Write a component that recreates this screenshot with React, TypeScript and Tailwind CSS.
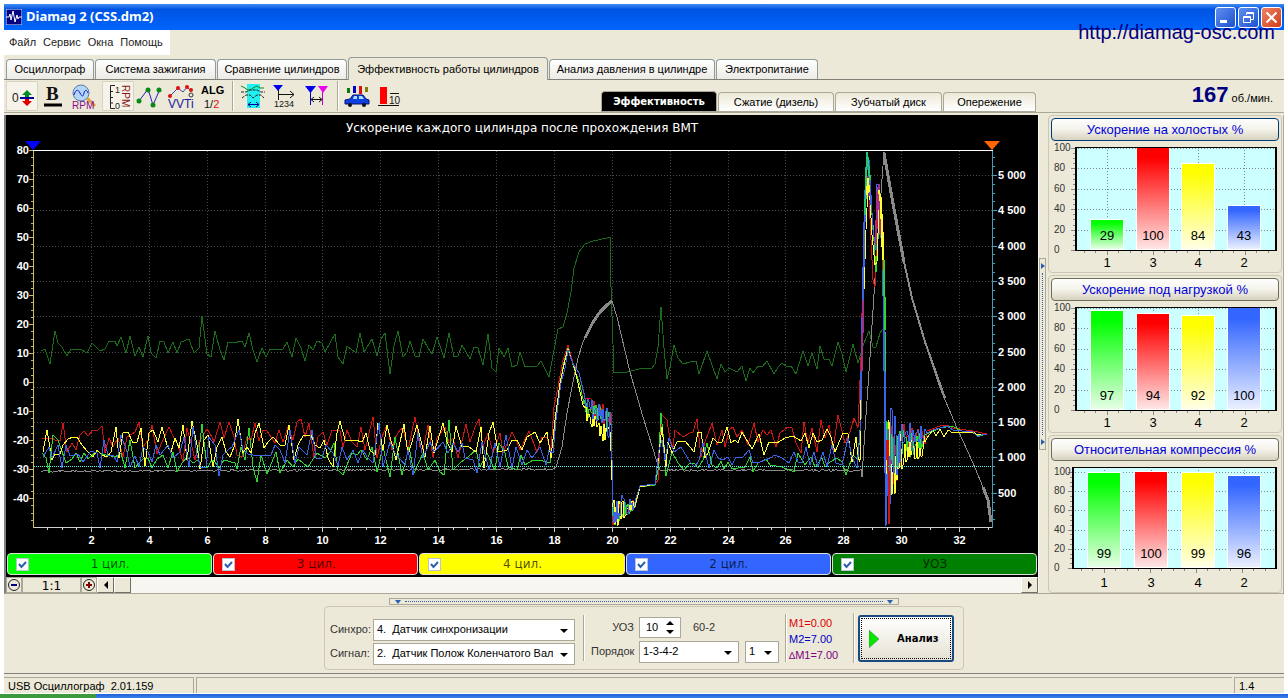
import React, { useState } from 'react';
import { clsx } from 'clsx';

const SANS = "font-['Liberation_Sans',Arial,sans-serif]";

const mainTabs = [
  { label: 'Осциллограф', width: 'w-[88px]' },
  { label: 'Система зажигания', width: 'w-[121px]' },
  { label: 'Сравнение цилиндров', width: 'w-[130px]' },
  { label: 'Эффективность работы цилиндров', width: 'w-[200px]' },
  { label: 'Анализ давления в цилиндре', width: 'w-[166px]' },
  { label: 'Электропитание', width: 'w-[102px]' },
];

const subTabs = [
  { label: 'Эффективность', width: 'w-[116px]' },
  { label: 'Сжатие (дизель)', width: 'w-[116px]' },
  { label: 'Зубчатый диск', width: 'w-[107px]' },
  { label: 'Опережение', width: 'w-[93px]' },
];

const legend = [
  { label: '1 цил.', color: 'bg-[#00ff00]' },
  { label: '3 цил.', color: 'bg-[#ff0000]' },
  { label: '4 цил.', color: 'bg-[#ffff00]' },
  { label: '2 цил.', color: 'bg-[#3366ff]' },
  { label: 'УОЗ', color: 'bg-[#008000]' },
];

// ---------- traces ----------

// dense jitter between two levels, one point per pixel
const burst = (x0: number, x1: number, y0: number, y1: number, a0: number, a1: number, seed: number) => {
  const pts: string[] = [];
  let s = seed;
  for (let x = x0; x <= x1; x++) {
    s = (s * 9301 + 49297) % 233280;
    const t = (x - x0) / (x1 - x0);
    const y = y0 + (y1 - y0) * t + (s / 233280 - 0.5) * 2 * (a0 + (a1 - a0) * t);
    pts.push(`${x},${Math.round(Math.min(y, 526))}`);
  }
  return pts.join(' ');
};

const advance =
  '41,351 45,349 50,364 55,331 58,343 62,347 67,356 71,349 80,349 87,353 92,343 100,351 105,349 109,341 115,341 117,346 121,337 126,353 130,336 135,356 139,347 143,357 148,336 151,353 156,358 160,341 164,342 168,353 173,342 177,353 181,342 189,339 194,353 199,348 202,316 207,354 211,357 215,331 220,350 224,360 228,342 233,343 242,341 245,347 249,333 253,350 257,362 262,348 266,357 270,349 283,349 287,342 292,357 296,338 301,348 305,361 309,345 313,350 317,341 322,343 325,352 335,334 338,357 343,364 347,346 356,353 360,333 364,352 372,339 377,356 381,339 385,333 390,374 394,346 398,331 403,357 407,352 410,341 415,356 419,357 423,339 428,348 432,354 437,337 444,358 449,333 454,357 458,356 462,345 470,359 474,347 478,348 483,365 488,334 492,368 496,372 499,348 504,357 508,348 512,367 517,365 520,352 525,367 537,366 541,361 549,377 554,350 558,329 563,327 567,313 571,292 574,268 579,252 585,244 593,241 607,238 610,237 611,287 614,373 627,372 643,368 652,368 655,364 658,347 661,307 664,348 667,379 670,367 674,345 678,358 683,364 690,362 696,361 699,374 707,351 717,379 721,364 725,372 729,368 737,372 742,366 746,381 750,368 753,373 758,366 762,367 767,361 774,374 778,367 782,363 787,367 791,366 796,374 803,351 808,366 812,353 817,369 820,346 824,359 829,359 832,366 838,342 842,354 846,372 853,344 858,363 864,343 869,331 873,347 876,347 880,333 883,329';

const rpm = [
  burst(41, 553, 471, 469, 1, 1, 11),
  '556,467 562,447 567,413 572,387 578,358 583,342 590,327 598,314 607,305 612,301 617,317 630,372 643,417 657,462 660,470',
  burst(662, 861, 470, 470, 1, 1, 5),
  '862,477 865,430 870,357 873,310 876,263 881,193 884,152 890,190 901,247 910,290 923,337 940,388 957,428 973,463 983,487 987,497 991,522',
].join(' ');

const tail = '927,433 933,430 940,428 947,426 953,430 962,431 973,432 978,437 983,434 987,434';

const cyl3 = [
  '42,438 52,438 55,440 60,441 63,423 67,452 72,443 76,450 80,435 84,431 88,436 93,430 97,431 102,426 105,453 109,438 113,447 118,438 123,457 127,437 132,434 135,432 139,422 143,447 148,440 152,425 157,454 162,442 169,427 173,436 178,445 183,462 187,428 192,447 195,460 199,442 207,429 212,437 214,442 220,422 224,438 229,422 234,437 237,455 242,457 247,437 251,440 255,423 259,441 263,430 267,431 275,443 279,430 283,442 288,427 293,440 297,422 301,419 305,437 309,423 314,458 318,437 323,432 327,445 332,430 340,431 343,447 347,430 352,442 357,447 361,427 365,450 373,417 377,458 382,437 387,425 392,450 395,438 400,430 403,428 408,450 415,417 420,447 423,450 428,425 433,457 437,438 445,427 449,443 453,438 458,458 466,424 470,442 475,427 479,419 483,447 488,433 493,453 500,433 503,453 512,432 517,442 520,450 529,431 537,452 542,437 547,438 551,450 554,407 558,387 563,360 568,345 573,363 579,373 585,398',
  burst(587, 611, 406, 418, 9, 12, 71),
  burst(613, 635, 512, 504, 14, 4, 19),
  '640,486 655,485 658,480 662,415 667,420 670,440 673,447 675,430 683,437 690,433 693,432 697,419 701,457 705,442 712,423 717,445 722,430 725,447 729,430 733,427 737,437 742,430 748,445 754,423 758,442 763,430 767,435 771,430 776,447 780,433 788,427 792,428 796,443 801,453 804,422 808,443 812,428 817,452 821,420 825,438 829,425 833,450 838,415 845,443 850,432 854,418 858,428 861,357 863,270 866,190 868,176 871,240 873,280 875,287 877,230 879,184 881,205 883,270 885,380 887,490',
  burst(888, 903, 470, 445, 50, 15, 33),
  burst(904, 925, 440, 436, 16, 8, 45),
  '927,431 940,426 947,425 953,428 973,431 987,434',
].join(' ');

const cyl4 = [
  '43,452 47,430 52,460 55,454 60,454 63,445 68,439 73,437 77,437 82,445 87,451 93,457 97,450 102,455 107,457 111,452 116,427 119,458 123,433 128,432 133,443 137,442 141,428 145,466 149,433 153,430 158,442 162,427 167,445 171,452 175,438 179,448 183,425 187,460 192,421 197,445 200,469 204,440 208,435 213,467 217,447 222,437 226,452 230,457 234,447 238,419 243,453 247,447 251,453 255,433 259,423 264,448 268,442 273,437 280,445 285,445 289,425 294,460 298,445 303,436 311,435 315,445 320,448 324,440 328,458 333,467 337,433 340,421 345,440 348,440 355,440 362,442 366,433 370,450 375,455 378,423 383,450 387,425 396,460 404,424 408,455 417,425 425,457 430,426 434,453 443,423 447,442 452,452 456,426 462,447 468,446 476,452 481,427 484,468 489,433 493,422 498,452 507,450 512,440 517,440 522,450 527,437 535,432 540,443 547,432 551,458 555,420 560,383 565,360 568,349 575,370 583,405',
  burst(585, 611, 412, 440, 8, 12, 101),
  '612,480',
  burst(613, 635, 515, 504, 18, 5, 77),
  '640,487 655,484 659,453 662,427 666,467 668,442 672,453 677,442 685,441 690,447 694,452 698,432 701,432 705,458 708,453 713,438 718,443 722,442 727,427 731,443 735,440 738,443 742,432 752,449 759,434 764,455 769,442 777,443 785,438 793,436 801,441 805,433 809,448 813,433 817,442 822,440 827,429 831,437 835,452 840,440 843,433 848,434 852,462 856,437 858,457 860,462 861,378 864,290 866,230 868,186 870,200 872,235 875,265 877,262 879,205 881,197 883,230 884,330 886,460',
  burst(887, 903, 460, 460, 50, 24, 61),
  burst(904, 925, 455, 444, 20, 12, 9),
  '927,438 933,430 936,436 940,429 944,437 948,430 953,433 960,432 973,432 978,435 987,434',
].join(' ');

const cyl2 = [
  '43,457 49,447 52,458 58,445 62,468 66,445 70,456 78,454 83,462 91,451 97,453 100,468 104,440 108,455 113,455 117,462 121,435 127,452 130,467 135,456 139,467 143,447 148,452 152,462 156,445 160,455 168,445 173,458 180,452 184,437 189,467 193,427 197,455 201,468 206,467 209,437 215,445 219,476 223,455 228,450 232,447 239,430 243,450 248,454 258,456 271,455 275,445 280,450 285,463 290,430 295,463 299,447 307,455 312,430 316,458 322,458 326,445 333,453 338,466 342,447 347,460 353,450 358,463 363,450 367,457 373,463 379,423 383,467 390,442 395,453 405,465 408,450 413,475 418,433 423,458 430,442 434,452 443,442 448,453 453,443 458,452 462,443 465,458 473,460 477,473 482,442 489,470 495,443 500,467 506,435 512,468 516,447 522,465 527,450 532,458 540,447 546,465 549,450 553,453 556,420 561,383 565,368 568,350 573,364 579,373 584,393',
  burst(586, 611, 405, 425, 10, 16, 7),
  '612,460',
  burst(613, 633, 508, 506, 17, 6, 29),
  '636,498 640,486 655,484 659,450 662,440 665,460 669,438 674,452 681,447 690,462 695,467 699,460 703,443 709,468 714,450 718,458 723,460 728,457 732,465 736,457 743,457 749,450 753,463 760,462 770,458 775,455 782,458 789,463 794,452 798,462 802,463 806,447 810,465 814,452 818,467 823,452 827,467 832,445 836,463 842,465 848,438 852,457 857,468 859,443 861,420 863,290 865,200 867,165 869,160 871,195 873,230 876,250 876,184 878,184 880,235 882,240 884,262 885,380 886,526',
  burst(887, 900, 460, 445, 62, 20, 15),
  burst(901, 925, 440, 434, 20, 9, 83),
  tail,
].join(' ');

const cyl1 = [
  '42,453 46,458 49,473 53,435 58,440 66,463 72,459 76,453 80,462 84,453 88,459 97,451 102,454 115,457 121,453 125,468 130,440 135,468 139,463 143,459 148,458 152,468 157,459 163,455 168,468 173,452 177,472 182,463 187,457 193,463 198,460 202,424 207,468 212,460 215,462 219,468 224,460 235,463 237,469 241,447 245,460 249,428 253,467 257,482 261,455 267,474 276,452 280,473 287,460 293,467 298,459 308,467 317,453 325,458 330,452 334,443 338,470 343,475 347,465 352,453 357,455 361,450 367,460 372,447 377,472 383,447 390,477 395,437 402,475 409,447 414,473 423,453 428,470 435,460 440,472 444,475 449,420 453,470 460,463 468,457 476,450 480,467 487,453 495,470 499,443 505,453 508,467 517,470 521,455 525,465 533,460 543,461 550,463 554,433 559,390 564,362 568,348 574,368 580,385',
  burst(584, 611, 407, 424, 8, 13, 53),
  burst(613, 635, 510, 505, 17, 5, 37),
  '640,487 655,485 658,470 661,413 664,445 666,476 672,452 678,463 684,470 690,463 694,463 698,468 703,460 707,443 712,465 717,468 721,461 724,469 728,462 732,469 745,467 750,457 753,472 758,463 766,459 770,465 782,467 794,472 798,453 805,465 811,457 815,467 822,458 825,467 830,462 837,458 842,462 846,475 853,455 858,460 860,430 863,310 865,210 867,152 869,168 871,205 873,225 876,272 878,240 880,195 882,225 884,262 885,330 886,440',
  burst(887, 902, 455, 450, 40, 18, 97),
  burst(903, 925, 446, 438, 18, 8, 21),
  '927,434 940,428 952,426 962,431 973,433 979,436 987,434',
].join(' ');

const traces = [
  { points: advance, color: '#1a6b1a' },
  { points: rpm, color: '#8a8a8a' },
  { points: cyl3, color: '#d21414' },
  { points: cyl1, color: '#2fd62f' },
  { points: cyl4, color: '#ffff30' },
  { points: cyl2, color: '#3c64e6' },
];

const range = (n: number) => Array.from({ length: n }, (_, i) => i);

function MainChart() {
  const xOf = (v: number) => Math.round(33 + 28.94 * v) + 0.5;
  const rpmY = (v: number) => Math.round(528 - 0.0706 * v) + 0.5;

  return (
    <svg viewBox="6 115 1032 437" className="block w-full" role="img" aria-label="Ускорение каждого цилиндра">
      <text x="522" y="132" textAnchor="middle" fontSize="12" fill="#fff" fontFamily="DejaVu Sans, Verdana, sans-serif">
        Ускорение каждого цилиндра после прохождения ВМТ
      </text>

      <g stroke="#4a4a4a" strokeDasharray="1 2" shapeRendering="crispEdges">
        {range(16).map(i => <line key={i} x1={xOf(2 + i * 2)} x2={xOf(2 + i * 2)} y1="151" y2="527" />)}
        {range(10).map(i => <line key={i} x1="34" x2="992" y1={rpmY(500 + i * 500)} y2={rpmY(500 + i * 500)} />)}
      </g>

      <g fill="none" shapeRendering="crispEdges">
        {traces.map(t => <polyline key={t.color} points={t.points} stroke={t.color} strokeWidth="1" />)}
        {/* the cylinders alternate along the steep edges */}
        <polyline points="861,400 863,290 865,200 867,160 869,168 871,205" stroke="#3c64e6" strokeWidth="2" />
        <polyline points="862,370 863,300" stroke="#a0308c" strokeWidth="2" />
        <polyline points="865,215 867,152 870,180" stroke="#20c878" strokeWidth="2" />
        <polyline points="867,195 868,178 869,192" stroke="#ffff30" strokeWidth="2" />
        <polyline points="876,245 877,195 879,184 880,235" stroke="#a0308c" strokeWidth="2" />
        <polyline points="879,190 881,205 883,260" stroke="#ffff30" strokeWidth="2" />
        <polyline points="883,270 884,320 885,420 886,524" stroke="#3c64e6" strokeWidth="2" />
        <polyline points="884,260 885,330" stroke="#2fd62f" strokeWidth="2" />
        <polyline points="888,440 889,500 889,524" stroke="#d21414" strokeWidth="2" />
        <polyline points="585,338 592,324 600,312 607,305 612,301" stroke="#8a8a8a" strokeWidth="3" />
        <polyline points="884,153 890,187 897,225 904,262" stroke="#8a8a8a" strokeWidth="3" />
        <polyline points="904,262 912,298 925,342 945,398" stroke="#8a8a8a" strokeWidth="2" />
        <polyline points="983,487 988,500 991,522" stroke="#8a8a8a" strokeWidth="3" />
        <line x1="34" x2="992" y1="466.5" y2="466.5" stroke="#5ff0e6" strokeDasharray="1 1" />
      </g>

      <g shapeRendering="crispEdges">
        <line x1="33" x2="993" y1="150.5" y2="150.5" stroke="#fff" />
        <line x1="33" x2="993" y1="527.5" y2="527.5" stroke="#d0d0d0" />
        <line x1="33.5" x2="33.5" y1="151" y2="528" stroke="#c8bc60" />
        <line x1="992.5" x2="992.5" y1="151" y2="528" stroke="#4a9cb4" />
        {range(52).map(i => (
          <line key={i} x1={i % 4 ? 31 : 29} x2="33" y1={Math.round(150 + i * 7.25) + 0.5} y2={Math.round(150 + i * 7.25) + 0.5} stroke="#c8bc60" />
        ))}
        {range(42).map(i => (
          <line key={i} x1="993" x2={(i + 1) % 4 ? 995 : 997} y1={rpmY((i + 1) * 125)} y2={rpmY((i + 1) * 125)} stroke="#4a9cb4" />
        ))}
        {range(66).map(i => (
          <line key={i} x1={xOf((i + 1) / 2)} x2={xOf((i + 1) / 2)} y1="528" y2={(i + 1) % 4 ? 530 : 532} stroke="#d0d0d0" />
        ))}
      </g>
      <path d="M25 141h16l-8 9z" fill="#0000ff" />
      <path d="M984 141h16l-8 9z" fill="#ff6600" />

      <g fill="#fff" fontFamily="Liberation Sans, Arial, sans-serif" fontSize="11" fontWeight="bold">
        {range(13).map(i => (
          <text key={i} x="29" y={154 + i * 29} textAnchor="end">{80 - i * 10}</text>
        ))}
        {range(16).map(i => (
          <text key={i} x={xOf(2 + i * 2)} y="544" textAnchor="middle">{2 + i * 2}</text>
        ))}
        {range(10).map(i => {
          const v = 500 + i * 500;
          const label = v >= 1000 ? `${Math.floor(v / 1000)} ${String(v % 1000).padStart(3, '0')}` : String(v);
          return <text key={i} x="998" y={rpmY(v) + 3}>{label}</text>;
        })}
      </g>
    </svg>
  );
}

// ---------- bar panels ----------

const barColors = ['#00ff00', '#ff0000', '#ffff00', '#3366ff'];
const barNames = ['1', '3', '4', '2'];

interface BarPanelProps {
  id: string;
  title: string;
  values: number[];
  left: number;
  bottom: number;
  step: number;
  centers: number[];
  active?: boolean;
}

function BarPanel({ id, title, values, left, bottom, step, centers, active }: BarPanelProps) {
  return (
    <section className="h-[158px] rounded border border-[#cbc7b4] p-[2px]">
      <button
        className={clsx(
          'block h-[23px] w-full rounded-sm border bg-linear-to-b from-white via-[#f3f2ea] to-[#d8d3bf] text-[13px] leading-[20px] text-[#0000d8]',
          active ? 'border-[#003c74]' : 'border-[#6f6d5c]'
        )}
      >
        {title}
      </button>
      <svg viewBox="0 0 228 130" className="block w-full" fontFamily="Liberation Sans, Arial, sans-serif">
        <defs>
          {barColors.map((c, i) => (
            <linearGradient key={c} id={`${id}${i}`} x1="0" y1="0" x2="0" y2="1">
              <stop offset="0.1" stopColor={c} />
              <stop offset="1" stopColor={c} stopOpacity="0.1" />
            </linearGradient>
          ))}
        </defs>
        <g shapeRendering="crispEdges">
          <rect x={left} y="6" width={225 - left} height={bottom - 6} fill="#ccffff" />
          <g stroke="#7a8a8a" strokeDasharray="1 2">
            {range(5).map(i => {
              const y = Math.round(bottom - (i + 1) * step) + 0.5;
              return <line key={i} x1={left} x2="225" y1={y} y2={y} />;
            })}
            {centers.map(c => <line key={c} x1={c + 0.5} x2={c + 0.5} y1="6" y2={bottom} />)}
          </g>
          {values.map((v, i) => {
            const h = Math.round((v * step) / 20);
            return (
              <g key={i}>
                <rect x={centers[i] - 17} y={bottom - h - 1} width="34" height={h + 1} fill="#fff" />
                <rect x={centers[i] - 16} y={bottom - h} width="32" height={h - 1} fill={`url(#${id}${i})`} />
              </g>
            );
          })}
          <path d={`M${left} 6.5H225M${left} ${bottom + 0.5}H226`} stroke="#000" fill="none" />
          <path d={`M${left + 1} 6V${bottom}M225 6V${bottom}`} stroke="#000" strokeWidth="2" fill="none" />
          {range(21).map(i => (
            <line key={i} x1={left - (i % 4 ? 2 : 4)} x2={left} y1={Math.round(bottom - i * step / 4) + 0.5} y2={Math.round(bottom - i * step / 4) + 0.5} stroke="#888" />
          ))}
          {range(17).map(i => (
            <line key={i} x1={centers[0] - 23 + i * 11.5} x2={centers[0] - 23 + i * 11.5} y1={bottom + 1} y2={bottom + (i % 4 === 2 ? 5 : 3)} stroke="#888" />
          ))}
        </g>
        <g fontSize="10" fill="#333">
          {range(6).map(i => (
            <text key={i} x="3" y={Math.round(bottom - i * step) + 3}>{i * 20}</text>
          ))}
        </g>
        <g fontSize="13" fill="#000" textAnchor="middle">
          {values.map((v, i) => <text key={i} x={centers[i]} y={bottom - 10}>{v}</text>)}
          {barNames.map((n, i) => <text key={n} x={centers[i]} y="126">{n}</text>)}
        </g>
      </svg>
    </section>
  );
}

// ---------- toolbar ----------

function ToolButton({ label, pressed, children }: { label: string; pressed?: boolean; children: React.ReactNode }) {
  return (
    <button
      aria-label={label}
      className={clsx('h-[30px] w-8 shrink-0', pressed && 'border border-[#d8d4c2] bg-[#f6f4ea]')}
    >
      <svg viewBox="0 0 32 30" className="-m-px block h-[30px] w-8" fill="none" fontFamily="Liberation Sans, Arial, sans-serif">
        {children}
      </svg>
    </button>
  );
}

const Separator = ({ className }: { className?: string }) => (
  <div className={clsx('w-[2px] shrink-0 border-l border-[#aca899] border-r border-r-white', className)} />
);

function Toolbar() {
  return (
    <div className="flex h-[30px]">
      <ToolButton label="Ноль" pressed>
        <text x="6" y="21" fontSize="12" fill="#222">0</text>
        <path d="M14 17h14" stroke="#00009c" strokeWidth="2" />
        <path d="M21 9l5 5h-3v2h-4v-2h-3z" fill="#008a20" />
        <path d="M21 25l5-5h-3v-2h-4v2h-3z" fill="#e00000" />
      </ToolButton>
      <ToolButton label="Жирная линия">
        <text x="9" y="19" fontSize="19" fontWeight="bold" fill="#111" fontFamily="Liberation Serif, serif">B</text>
        <path d="M7 24h18" stroke="#000" strokeWidth="3" />
      </ToolButton>
      <ToolButton label="Обороты">
        <circle cx="12" cy="12" r="8" fill="#b4d6f6" stroke="#5a7ea8" />
        <path d="M5 14c2-6 4-6 6-2s3 4 4 0 3-3 4 0" stroke="#1a1ac8" />
        <path d="M18 17l8 8" stroke="#e0a040" strokeWidth="3" />
        <text x="3" y="28" fontSize="10" fill="#8c0a8c">RPM</text>
      </ToolButton>
      <ToolButton label="Шкала оборотов" pressed>
        <path d="M13 4.500H8.500V27.500H13M8.500 10.500H11M8.500 16.500H11M8.500 22H11" stroke="#222" />
        <text x="13" y="12" fontSize="9" fill="#222">1</text>
        <text x="13" y="28" fontSize="9" fill="#222">0</text>
        <text transform="translate(20 4) rotate(90)" fontSize="10" fill="#8b1414">RPM</text>
      </ToolButton>
      <ToolButton label="Точки">
        <path d="M6 20L15 8L20 24L27 8" stroke="#2020c0" />
        <g fill="#0a8a14">
          <circle cx="6" cy="20" r="2.500" /><circle cx="15" cy="9" r="2.500" />
          <circle cx="20" cy="24" r="2.500" /><circle cx="26" cy="9" r="2.500" />
        </g>
      </ToolButton>
      <ToolButton label="VVTi">
        <path d="M5 15L13 7L18 11L22 6L26 10" stroke="#4040b0" />
        <g fill="#e01010">
          <circle cx="5" cy="15" r="2" /><circle cx="13" cy="7" r="2" /><circle cx="22" cy="6" r="2" /><circle cx="26" cy="9" r="2" />
        </g>
        <circle cx="26" cy="14" r="2" stroke="#333" />
        <text x="3" y="27" fontSize="12" fill="#1a1a9c">VVTi</text>
      </ToolButton>
      <ToolButton label="Алгоритм">
        <text x="4" y="13" fontSize="11" fontWeight="bold" fill="#000">ALG</text>
        <text x="7" y="27" fontSize="11" fill="#111">1/<tspan fill="#e01010">2</tspan></text>
      </ToolButton>
      <Separator className="ml-[2px] mr-1" />
      <ToolButton label="Окно синхронизации">
        <rect x="10" y="3" width="13" height="24" fill="#20f0f0" />
        <path d="M4 5l4 2q4 4 8 0l4-2l3 2h4" stroke="#0a8a20" />
        <path d="M4 11h5l4-2h7l4 2h4M5 17l4-3h4l3 3l4-3h4l3 3" stroke="#222" strokeDasharray="3 1" />
        <path d="M11 23.500h11M14 21l-3 2.500l3 2.500M19 21l3 2.500l-3 2.500" stroke="#0000a0" />
      </ToolButton>
      <ToolButton label="Порядок цилиндров">
        <path d="M4 4h10l-5 6z" fill="#0000f0" />
        <path d="M9.500 9v10M10 13.500h15M21 10l4 3.500l-4 3.500" stroke="#111" />
        <text x="5" y="26" fontSize="9" fill="#111">1234</text>
      </ToolButton>
      <ToolButton label="Маркеры">
        <path d="M4 5h11l-5.500 7z" fill="#0000f0" />
        <path d="M17 5h10l-5 7z" fill="#f000f0" />
        <path d="M9.500 11v13" stroke="#0000c0" /><path d="M21.500 11v13" stroke="#c000c0" />
        <path d="M10 18.500h11M13 16l-3 2.500l3 2.500M18 16l3 2.500l-3 2.500" stroke="#111" />
      </ToolButton>
      <Separator className="ml-[3px] mr-[3px]" />
      <ToolButton label="Автомобиль">
        <path d="M6 7h3v5h-3z" fill="#0a7a0a" /><path d="M12 5h3v7h-3z" fill="#0000c8" />
        <path d="M18 5h3v8h-3z" fill="#e01010" /><path d="M24 6h3v5h-3z" fill="#808000" />
        <path d="M4 19l5-1l3-4h10l3 4l3 1v4H4z" fill="#1040e0" stroke="#001080" />
        <path d="M13 15h3v3h-4zM18 15h3l2 3h-5z" fill="#a8e0ff" />
        <circle cx="9" cy="24" r="2" fill="#111" /><circle cx="23" cy="24" r="2" fill="#111" />
      </ToolButton>
      <ToolButton label="Столбцы">
        <path d="M7 6h7v17h-7z" fill="#ff0000" />
        <path d="M5 24.500h21M17 12.500h9" stroke="#111" />
        <text x="16" y="23" fontSize="10" fill="#111">10</text>
      </ToolButton>
    </div>
  );
}

// ---------- bottom controls ----------

interface DropdownProps {
  id: string;
  options: string[];
  className: string;
  ariaLabel?: string;
}

function Dropdown({ id, options, className, ariaLabel }: DropdownProps) {
  return (
    <div className={clsx('relative h-[22px] border border-[#aca899] bg-white', className)}>
      <select
        id={id}
        aria-label={ariaLabel}
        className="h-full w-full appearance-none overflow-hidden whitespace-pre bg-white pl-[3px] pr-[18px] text-[11px] text-black outline-none"
      >
        {options.map(o => <option key={o}>{o}</option>)}
      </select>
      <svg viewBox="0 0 8 4" className="pointer-events-none absolute right-[6px] top-[9px] h-1 w-2"><path d="M0 0h8L4 4z" /></svg>
    </div>
  );
}

function AnalysisBar() {
  return (
    <div className="mx-auto flex h-16 w-[640px] gap-[6px] rounded border border-[#cbc7b4] pl-[5px] text-[11px] text-[#333]">
      <div className="grid grid-cols-[38px_202px] content-center gap-x-[5px] gap-y-[2px] pt-[7px]">
        <label htmlFor="sync" className="self-center">Синхро:</label>
        <Dropdown id="sync" className="w-[202px]" options={['4.\u00a0\u00a0Датчик синхронизации']} />
        <label htmlFor="signal" className="self-center">Сигнал:</label>
        <Dropdown id="signal" className="w-[202px]" options={['2.\u00a0\u00a0Датчик Полож Коленчатого Вал']} />
      </div>
      <Separator className="my-2 ml-[2px]" />
      <div className="grid grid-cols-[43px_140px] content-center gap-x-[5px] gap-y-[3px] pt-[3px]">
        <label htmlFor="advance" className="self-center text-right">УОЗ</label>
        <div className="flex items-center">
          <div className="flex h-[21px] w-[42px] items-center border border-[#aca899] bg-white">
            <input id="advance" defaultValue="10" className="w-[26px] pl-[6px] text-[11px] text-black outline-none" />
            <div className="flex flex-col gap-[5px]">
              <button aria-label="Больше"><svg viewBox="0 0 8 4" className="block h-1 w-2"><path d="M4 0l4 4H0z" /></svg></button>
              <button aria-label="Меньше"><svg viewBox="0 0 8 4" className="block h-1 w-2"><path d="M0 0h8L4 4z" /></svg></button>
            </div>
          </div>
          <span className="ml-3">60-2</span>
        </div>
        <label htmlFor="order" className="self-center text-right">Порядок</label>
        <div className="flex gap-[6px]">
          <Dropdown id="order" className="w-[100px]" options={['1-3-4-2']} />
          <Dropdown id="first" className="w-[34px]" options={['1']} ariaLabel="Первый цилиндр" />
        </div>
      </div>
      <Separator className="my-[7px]" />
      <div className="-ml-1 w-[58px] whitespace-nowrap pt-2 text-[11px] leading-4">
        <p className="text-[#e00000]">M1=0.00</p>
        <p className="text-[#0000c8]">M2=7.00</p>
        <p className="text-[#800080]"><span className="text-[10px]">∆</span>M1=7.00</p>
      </div>
      <Separator className="my-[6px]" />
      <button className="-ml-[3px] mt-2 h-[47px] w-24 rounded-[3px] border-2 border-[#1b4a80] bg-linear-to-b from-white to-[#e4e1d4] p-px">
        <span className="flex h-full items-center gap-[18px] border border-dotted border-black pl-[7px] text-[10px] font-bold text-black font-['DejaVu_Sans',Verdana,sans-serif]">
          <svg viewBox="0 0 10 18" className="h-[18px] w-[10px]"><path d="M0 0l10 9L0 18z" fill="#00e800" stroke="#707070" strokeWidth="0.500" /></svg>
          Анализ
        </span>
      </button>
    </div>
  );
}

export default function App() {
  const [activeTab, setActiveTab] = useState(3);
  const [activeSub, setActiveSub] = useState(0);

  return (
    <div className={clsx('flex min-h-screen flex-col bg-white text-black', SANS)}>
      <div className="mx-1 mt-1 flex flex-1 flex-col bg-[#ece9d8]">
        {/* Title bar */}
        <header className="relative flex h-[26px] items-center bg-linear-to-b from-[#3f8cf3] via-[#0054e3] via-20% to-[#0064fc] px-[2px]">
          <svg viewBox="0 0 16 16" className="h-4 w-4" fill="none">
            <rect width="16" height="16" fill="#000080" stroke="#dfe8ff" />
            <path d="M0 8h3l1-3l1 6l2-9l2 11l2-7l1 4l1-2h3" stroke="#fff" />
          </svg>
          <h1 className="ml-1 text-[13px] font-bold text-white font-['Noto_Sans',Tahoma,sans-serif]">Diamag 2 (CSS.dm2)</h1>
          <div className="ml-auto flex gap-[2px]">
            <button aria-label="Свернуть" className="h-[21px] w-[21px] rounded-[3px] border border-white bg-linear-to-br from-[#5f8ff0] to-[#1f4fd0]">
              <svg viewBox="0 0 19 19" className="block"><path d="M4 12h7v3H4z" fill="#fff" /></svg>
            </button>
            <button aria-label="Восстановить" className="h-[21px] w-[21px] rounded-[3px] border border-white bg-linear-to-br from-[#5f8ff0] to-[#1f4fd0]">
              <svg viewBox="0 0 19 19" className="block" fill="none" stroke="#fff">
                <path d="M7.500 7V4.500h7v7H12M7 5.500h8" /><path d="M4.500 8.500h7v6h-7zM4 9.500h8" />
              </svg>
            </button>
            <button aria-label="Закрыть" className="h-[21px] w-[21px] rounded-[3px] border border-white bg-linear-to-br from-[#f08060] to-[#d03c14]">
              <svg viewBox="0 0 19 19" className="block"><path d="M4.500 4.500l10 10M14.500 4.500l-10 10" stroke="#fff" strokeWidth="2" /></svg>
            </button>
          </div>
          <a href="http://diamag-osc.com" className="absolute right-[9px] top-4 z-10 text-[20px] leading-6 text-[#000080]">http://diamag-osc.com</a>
        </header>

        <nav className="flex h-[25px] w-[166px] items-center gap-[7px] bg-white pl-[5px] text-[11px] text-[#222]">
          <button>Файл</button>
          <button>Сервис</button>
          <button>Окна</button>
          <button>Помощь</button>
        </nav>

        {/* Main tabs */}
        <div role="tablist" className="flex h-[25px] items-end gap-px border-b border-[#808076] pl-[2px] text-[11px]">
          {mainTabs.map((tab, i) => (
            <button
              key={tab.label}
              role="tab"
              aria-selected={i === activeTab}
              onClick={() => setActiveTab(i)}
              className={clsx(
                'shrink-0 whitespace-nowrap rounded-t border border-b-0 border-[#919b9c]',
                tab.width,
                i === activeTab ? '-mb-px h-[23px] bg-[#ece9d8]' : 'h-5 bg-linear-to-b from-white to-[#ecebe5]'
              )}
            >
              {tab.label}
            </button>
          ))}
        </div>

        {/* Toolbar, mode tabs and current speed */}
        <div className="flex h-[33px] border-b border-[#aca899] pl-[2px] pt-px">
          <Toolbar />
          <div role="tablist" className="ml-auto flex h-[31px] items-end gap-px border-b border-[#aca899] text-[11px]">
            {subTabs.map((tab, i) => (
              <button
                key={tab.label}
                role="tab"
                aria-selected={i === activeSub}
                onClick={() => setActiveSub(i)}
                className={clsx(
                  'shrink-0 whitespace-nowrap rounded-t border border-b-0 border-[#aca899]',
                  tab.width,
                  i === activeSub
                    ? "h-5 bg-black text-[10px] font-bold text-white font-['DejaVu_Sans',Verdana,sans-serif]"
                    : 'h-[19px] bg-linear-to-b from-[#ece9d8] to-white'
                )}
              >
                {tab.label}
              </button>
            ))}
          </div>
          <p className="w-[248px] pr-[11px] text-right text-[11px]">
            <span className="text-[22px] font-bold leading-7 text-[#000080]">167</span> об./мин.
          </p>
        </div>

        <main className="flex pt-[2px]">
          <div className="min-w-0 flex-1 border-l-2 border-[#808080]">
            <div className="bg-black pb-[2px]">
              <MainChart />
              <div className="flex gap-px px-px pt-px">
                {legend.map(item => (
                  <label
                    key={item.label}
                    className={clsx(
                      "flex h-[22px] flex-1 items-center rounded border border-[#e0e0e0] pl-2 text-[12px] text-black/70 font-['DejaVu_Sans',Verdana,sans-serif]",
                      item.color
                    )}
                  >
                    <input type="checkbox" defaultChecked className="peer sr-only" />
                    <svg viewBox="0 0 13 13" className="h-[13px] w-[13px] bg-white" fill="none">
                      <rect x="0.500" y="0.500" width="12" height="12" stroke="#b8c4d0" />
                      <path d="M3 6l2.500 3L10 4" stroke="#2b5fb0" strokeWidth="2" />
                    </svg>
                    <span className="flex-1 pr-5 text-center">{item.label}</span>
                  </label>
                ))}
              </div>
            </div>

            {/* Zoom and scroll */}
            <div className="flex h-4 bg-[#f7f6f0]">
              <button aria-label="Уменьшить" className="h-4 w-4 border border-[#aca899] bg-[#ece9d8]">
                <svg viewBox="0 0 14 14" className="block" fill="none"><circle cx="7" cy="7" r="5.500" stroke="#222" /><path d="M4 7h6" stroke="#000080" strokeWidth="2" /></svg>
              </button>
              <button className="w-[59px] border border-[#aca899] bg-[#ece9d8] text-[12px] leading-4 font-['DejaVu_Sans',Verdana,sans-serif]">1:1</button>
              <button aria-label="Увеличить" className="h-4 w-4 border border-[#aca899] bg-[#ece9d8]">
                <svg viewBox="0 0 14 14" className="block" fill="none"><circle cx="7" cy="7" r="5.500" stroke="#222" /><path d="M4 7h6M7 4v6" stroke="#800000" strokeWidth="2" /></svg>
              </button>
              <button aria-label="Влево" className="flex w-[17px] items-center justify-center border border-white border-b-[#716f64] border-r-[#716f64] bg-[#ece9d8]">
                <svg viewBox="0 0 4 8" className="h-2 w-1"><path d="M4 0v8L0 4z" /></svg>
              </button>
              <div className="w-[17px] border border-white border-b-[#716f64] border-r-[#716f64] bg-[#ece9d8]" />
              <button aria-label="Вправо" className="ml-auto flex w-[17px] items-center justify-center border border-white border-b-[#716f64] border-r-[#716f64] bg-[#ece9d8]">
                <svg viewBox="0 0 4 8" className="h-2 w-1"><path d="M0 0v8l4-4z" /></svg>
              </button>
            </div>
          </div>

          <div className="flex w-[10px] shrink-0 items-center border-l border-[#f8f7f0]">
            <div className="flex h-48 w-[7px] flex-col items-center justify-between border border-[#aca899] py-1">
              <svg viewBox="0 0 4 6" className="h-[6px] w-1"><path d="M0 0v6l4-3z" fill="#2b5fb0" /></svg>
              <div className="my-1 w-px flex-1 border-l border-dotted border-[#2b5fb0]" />
              <svg viewBox="0 0 4 6" className="h-[6px] w-1"><path d="M0 0v6l4-3z" fill="#2b5fb0" /></svg>
            </div>
          </div>

          <aside className="flex w-[236px] shrink-0 flex-col gap-[2px] border-r border-[#aca899] pr-px">
            <BarPanel id="idle" title="Ускорение на холостых %" values={[29, 100, 84, 43]} left={24} bottom={109} step={20.4} centers={[56, 102, 147, 193]} active />
            <BarPanel id="load" title="Ускорение под нагрузкой %" values={[97, 94, 92, 100]} left={24} bottom={109} step={20.4} centers={[56, 102, 147, 193]} />
            <BarPanel id="comp" title="Относительная компрессия %" values={[99, 100, 99, 96]} left={21} bottom={107} step={19.2} centers={[53, 100, 147, 193]} />
          </aside>
        </main>

        <div className="border-t border-[#aca899] pt-1">
          <div className="mx-auto flex h-[7px] w-[510px] items-center justify-between border border-[#aca899] px-[5px]">
            <svg viewBox="0 0 6 4" className="h-1 w-[6px]"><path d="M0 0h6L3 4z" fill="#2b5fb0" /></svg>
            <div className="mx-1 h-px flex-1 border-t border-dotted border-[#2b5fb0]" />
            <svg viewBox="0 0 6 4" className="h-1 w-[6px]"><path d="M0 0h6L3 4z" fill="#2b5fb0" /></svg>
          </div>
          <div className="pt-px">
            <AnalysisBar />
          </div>
        </div>

        {/* Status bar */}
        <footer className="mt-auto flex h-5 items-end border-t border-[#808080] text-[11px]">
          <div className="h-4 w-[190px] border-r border-t border-[#aca899] pl-1 leading-4">USB Осциллограф&nbsp; 2.01.159</div>
          <div className="ml-[2px] h-4 flex-1 border-l border-t border-[#aca899]" />
          <div className="ml-[2px] h-4 w-[50px] border-l border-t border-[#aca899] pl-1 leading-4">1.4</div>
        </footer>
      </div>
      <div className="mt-px flex h-1">
        <div className="w-24 bg-[#3c9a3c]" />
        <div className="flex-1 bg-linear-to-b from-[#1f5fd8] to-[#3a80ec]" />
      </div>
    </div>
  );
}
